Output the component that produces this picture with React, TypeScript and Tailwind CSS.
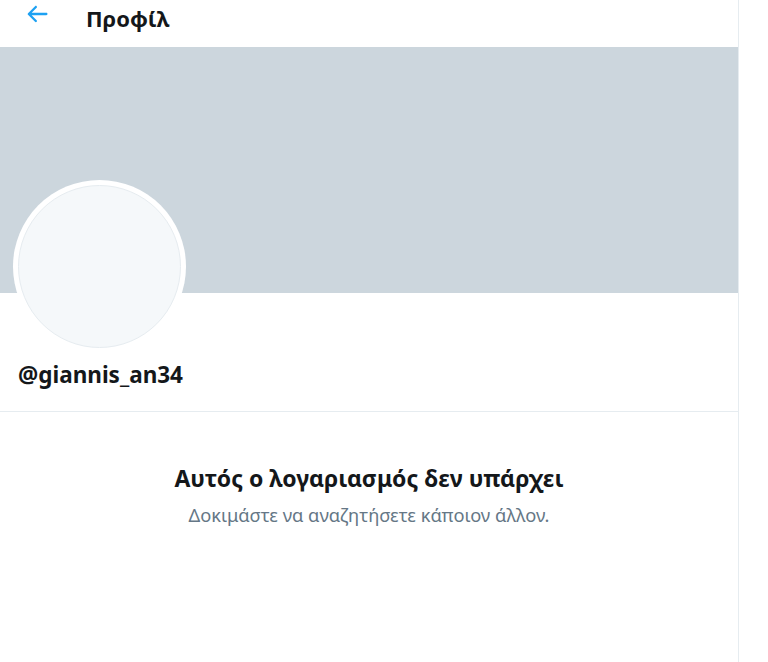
import React from 'react';

const App: React.FC = () => {
  return (
    <div className="w-[768px] h-[662px] bg-white flex font-['Noto_Sans',sans-serif] overflow-hidden">
      <div className="w-[739px] h-full border-r border-[#e6ecf0] flex flex-col">
        {/* Header */}
        <div className="h-[47px] flex items-start shrink-0">
          <div className="w-[74px] flex justify-center pt-[0px] pr-[1px]">
            <svg viewBox="0 0 24 24" className="w-[28px] h-[28px] text-[#1da1f2]" fill="currentColor">
              <path d="M20 11H7.414l4.293-4.293c.39-.39.39-1.023 0-1.414s-1.023-.39-1.414 0l-6 6c-.39.39-.39 1.023 0 1.414l6 6c.195.195.45.293.707.293s.512-.098.707-.293c.39-.39.39-1.023 0-1.414L7.414 13H20c.553 0 1-.447 1-1s-.447-1-1-1z" />
            </svg>
          </div>
          <h1 className="ml-[12px] pt-[5px] text-[22px] font-bold text-[#14171a] leading-[26px]">Προφίλ</h1>
        </div>

        {/* Banner */}
        <div className="h-[246px] bg-[#ccd6dd] shrink-0" />

        {/* Avatar + handle */}
        <div className="px-[13px] relative h-[118px] shrink-0">
          <div className="absolute left-[13px] -top-[113px] w-[173px] h-[173px] rounded-full bg-white p-[5px]">
            <div className="w-full h-full rounded-full bg-[#f5f8fa] border border-[#e6ecf0]" />
          </div>
          <div className="pt-[71px] pl-[5px] text-[22.5px] font-bold text-[#14171a] leading-none">@giannis_an34</div>
        </div>

        <div className="h-px bg-[#e6ecf0] shrink-0" />

        {/* Empty state */}
        <div className="flex flex-col items-center pt-[51px]">
          <div className="text-[23px] font-bold text-[#14171a] leading-[30px]">Αυτός ο λογαριασμός δεν υπάρχει</div>
          <div className="mt-[10px] text-[18.3px] text-[#657786] leading-[24px]">Δοκιμάστε να αναζητήσετε κάποιον άλλον.</div>
        </div>
      </div>
    </div>
  );
};

export default App;
